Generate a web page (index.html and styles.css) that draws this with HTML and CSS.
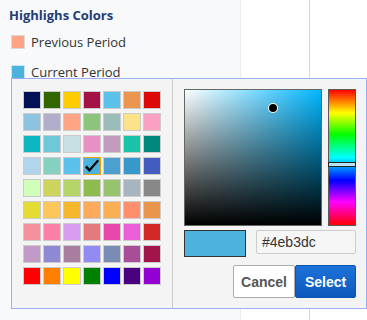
FILE: index.html
```html
<!DOCTYPE html>
<html lang="en">
<head>
    <meta charset="UTF-8">
    <meta name="viewport" content="width=device-width, initial-scale=1.0">
    <title>Highlight Colors</title>
    <link rel="stylesheet" href="styles.css">
</head>
<body>
    <div class="page">
        <div class="sidebar">
            <h3 class="title">Highlighs Colors</h3>
            <div class="legend-item">
                <span class="legend-swatch prev"></span>
                <span>Previous Period</span>
            </div>
            <div class="legend-item">
                <span class="legend-swatch curr"></span>
                <span>Current Period</span>
            </div>
        </div>
        <div class="gap-col"></div>
        <div class="rest"></div>
    </div>

    <!-- color picker popup -->
    <div class="picker">
        <div class="palette">
            <span class="sw" style="background:#001155"></span>
            <span class="sw" style="background:#336600"></span>
            <span class="sw" style="background:#ffcc00"></span>
            <span class="sw" style="background:#a31346"></span>
            <span class="sw" style="background:#5bc0ea"></span>
            <span class="sw" style="background:#eb954f"></span>
            <span class="sw" style="background:#dd0808"></span>

            <span class="sw" style="background:#8dc3e0"></span>
            <span class="sw" style="background:#b0aecb"></span>
            <span class="sw" style="background:#ffa484"></span>
            <span class="sw" style="background:#8cc47c"></span>
            <span class="sw" style="background:#9bbdba"></span>
            <span class="sw" style="background:#fce38a"></span>
            <span class="sw" style="background:#fba0c0"></span>

            <span class="sw" style="background:#0cb7c2"></span>
            <span class="sw" style="background:#6ec8d8"></span>
            <span class="sw" style="background:#c7e0e4"></span>
            <span class="sw" style="background:#e88fc3"></span>
            <span class="sw" style="background:#c39bbc"></span>
            <span class="sw" style="background:#19c3a8"></span>
            <span class="sw" style="background:#00887a"></span>

            <span class="sw" style="background:#b1d5ea"></span>
            <span class="sw" style="background:#84d1c0"></span>
            <span class="sw" style="background:#5bc0ea"></span>
            <span class="sw selected" style="background:#4eb3dc">
                <svg width="16" height="16" viewBox="0 0 16 16"><path d="M1 9.5 L3 7.5 L5.5 10.5 L13.5 1.5 L15 3 L5.5 14 Z" fill="#000"/></svg>
            </span>
            <span class="sw" style="background:#4ba0cf"></span>
            <span class="sw" style="background:#3799c9"></span>
            <span class="sw" style="background:#435cbd"></span>

            <span class="sw" style="background:#cfffb9"></span>
            <span class="sw" style="background:#cdd45b"></span>
            <span class="sw" style="background:#b5d466"></span>
            <span class="sw" style="background:#8ebb4e"></span>
            <span class="sw" style="background:#96c36d"></span>
            <span class="sw" style="background:#a8b4bf"></span>
            <span class="sw" style="background:#878787"></span>

            <span class="sw" style="background:#e5dc33"></span>
            <span class="sw" style="background:#fdc55a"></span>
            <span class="sw" style="background:#f7b72d"></span>
            <span class="sw" style="background:#feaa5c"></span>
            <span class="sw" style="background:#fcae55"></span>
            <span class="sw" style="background:#ff8f6a"></span>
            <span class="sw" style="background:#ea954c"></span>

            <span class="sw" style="background:#f5919d"></span>
            <span class="sw" style="background:#fc7fa7"></span>
            <span class="sw" style="background:#da9cf1"></span>
            <span class="sw" style="background:#e47a7e"></span>
            <span class="sw" style="background:#e848a9"></span>
            <span class="sw" style="background:#ea5fd8"></span>
            <span class="sw" style="background:#d22727"></span>

            <span class="sw" style="background:#c29ac8"></span>
            <span class="sw" style="background:#8e88d5"></span>
            <span class="sw" style="background:#a87da0"></span>
            <span class="sw" style="background:#908cf4"></span>
            <span class="sw" style="background:#7a8cb4"></span>
            <span class="sw" style="background:#a84d98"></span>
            <span class="sw" style="background:#a2154b"></span>

            <span class="sw" style="background:#ff0000"></span>
            <span class="sw" style="background:#ff8000"></span>
            <span class="sw" style="background:#ffff00"></span>
            <span class="sw" style="background:#008000"></span>
            <span class="sw" style="background:#0000ff"></span>
            <span class="sw" style="background:#4b0082"></span>
            <span class="sw" style="background:#9400d3"></span>
        </div>

        <div class="custom">
            <div class="spectrum">
                <div class="sat-box">
                    <span class="sat-marker"></span>
                </div>
                <div class="hue-bar">
                    <span class="hue-slider"></span>
                </div>
            </div>
            <div class="value-row">
                <span class="preview"></span>
                <input type="text" class="hex-input" value="#4eb3dc">
            </div>
            <div class="actions">
                <button class="btn cancel">Cancel</button>
                <button class="btn select">Select</button>
            </div>
        </div>
    </div>
</body>
</html>
```

FILE: styles.css
```css
* {
    box-sizing: border-box;
}

body {
    margin: 0;
    background-color: #fff;
    font-family: "Open Sans", sans-serif;
}

.page {
    display: flex;
    min-height: 100vh;
}

.sidebar {
    width: 241px;
    padding: 0 9px;
    background-color: #f8f9fa;
    border-right: 1px solid #ebebeb;
}

.title {
    margin: 5px 0 0 0;
    font-size: 13px;
    font-weight: 700;
    line-height: 20px;
    color: #1c3c78;
}

.legend-item {
    display: flex;
    align-items: center;
    gap: 6px;
    height: 30px;
    margin-top: 2px;
    margin-left: 2px;
    font-size: 13px;
    color: #333;
}

.legend-item + .legend-item {
    margin-top: 0;
}

.legend-swatch {
    width: 14px;
    height: 14px;
    border: 1px solid #e0d8d4;
}

.legend-swatch.prev {
    background-color: #ffa384;
}

.legend-swatch.curr {
    background-color: #4eb3dc;
    border-color: #cde4ee;
}

.gap-col {
    width: 69px;
    border-right: 1px solid #cfd8e6;
}

.rest {
    flex: 1;
}

/* popup */
.picker {
    position: absolute;
    left: 11px;
    top: 78px;
    width: 356px;
    height: 231px;
    display: flex;
    background-color: #f4f4f4;
    border: 1px solid #98aef6;
}

.palette {
    width: 161px;
    padding: 12px 0 0 11px;
    border-right: 1px solid #cccccc;
    display: grid;
    grid-template-columns: repeat(7, 18px);
    grid-auto-rows: 18px;
    column-gap: 2px;
    row-gap: 4px;
    align-content: start;
}

.sw {
    display: flex;
    align-items: center;
    justify-content: center;
    border: 1px solid #cccccc;
}

.sw.selected {
    border-color: #f5a300;
}

.custom {
    flex: 1;
    padding: 10px 0 0 11px;
}

.spectrum {
    display: flex;
    gap: 6px;
    height: 137px;
}

.sat-box {
    position: relative;
    width: 138px;
    border: 1px solid #666;
    background:
        linear-gradient(to top, #000, rgba(0, 0, 0, 0)),
        linear-gradient(to right, #fff, rgba(255, 255, 255, 0)),
        #00b7ff;
}

.sat-marker {
    position: absolute;
    left: 84px;
    top: 14px;
    width: 8px;
    height: 8px;
    border-radius: 50%;
    background-color: #000;
    box-shadow: 0 0 0 1px #fff;
}

.hue-bar {
    position: relative;
    width: 28px;
    border: 1px solid #5a5a5a;
    background: linear-gradient(to bottom, #f00 0%, #ff0 17%, #0f0 33%, #0ff 50%, #00f 67%, #f0f 83%, #f00 100%);
}

.hue-slider {
    position: absolute;
    left: -1px;
    right: -1px;
    top: 72px;
    height: 5px;
    background-color: #b9e4f5;
    border: 1px solid #222;
}

.value-row {
    display: flex;
    gap: 10px;
    margin-top: 4px;
}

.preview {
    width: 62px;
    height: 27px;
    background-color: #4eb3dc;
    border: 1px solid #333;
}

.hex-input {
    width: 100px;
    height: 24px;
    padding: 0 5px;
    font-family: "Liberation Sans", Arial, sans-serif;
    font-size: 14px;
    color: #333;
    background-color: #f6f6f6;
    border: 1px solid #ccc;
    border-radius: 2px;
}

.actions {
    display: flex;
    justify-content: flex-end;
    width: 172px;
    margin-top: 8px;
}

.btn {
    height: 33px;
    font-family: "Liberation Sans", Arial, sans-serif;
    font-size: 14px;
    font-weight: 700;
    border-radius: 2px;
    cursor: pointer;
}

.cancel {
    width: 62px;
    background-color: #fff;
    color: #555;
    border: 1px solid #aaa;
}

.select {
    width: 61px;
    background: linear-gradient(to bottom, #1d72d9, #0d58bd);
    color: #fff;
    border: 1px solid #0b55b5;
}
```
